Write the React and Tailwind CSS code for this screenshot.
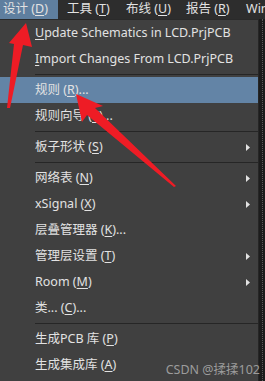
const menuBar = [
  { pre: '设计 (', key: 'D', post: ')', active: true, w: 'w-[58px]' },
  { pre: '工具 (', key: 'T', post: ')', w: 'w-[59px]' },
  { pre: '布线 (', key: 'U', post: ')', w: 'w-[60px]' },
  { pre: '报告 (', key: 'R', post: ')', w: 'w-[60px]' },
  { pre: 'Win', key: '', post: '', w: 'w-[28px]' },
];

// null = separator
const items = [
  { pre: '', key: 'U', post: 'pdate Schematics in LCD.PrjPCB' },
  { pre: '', key: 'I', post: 'mport Changes From LCD.PrjPCB' },
  null,
  { pre: '规则 (', key: 'R', post: ')...', active: true },
  { pre: '规则向导 (', key: 'E', post: ')...' },
  null,
  { pre: '板子形状 (', key: 'S', post: ')', sub: true },
  null,
  { pre: '网络表 (', key: 'N', post: ')', sub: true },
  { pre: 'xSignal (', key: 'X', post: ')', sub: true },
  { pre: '层叠管理器 (', key: 'K', post: ')...' },
  { pre: '管理层设置 (', key: 'T', post: ')', sub: true },
  { pre: 'Room (', key: 'M', post: ')', sub: true },
  { pre: '类... (', key: 'C', post: ')...' },
  null,
  { pre: '生成PCB 库 (', key: 'P', post: ')' },
  { pre: '生成集成库 (', key: 'A', post: ')' },
];

const Label = ({ pre, k, post }) => (
  <span className="whitespace-nowrap">
    {pre}
    {k && <span className="underline underline-offset-2">{k}</span>}
    {post}
  </span>
);

export default function App() {
  return (
    <div
      className="relative w-[265px] h-[381px] overflow-hidden bg-[#2b2b2b] text-[12.5px] leading-none text-[#e2e2e2]"
      style={{ fontFamily: '"Noto Sans", "Noto Sans CJK SC", sans-serif' }}
    >
      {/* menu bar */}
      <div className="flex h-[19px] bg-[#2d2d2d]">
        {menuBar.map((m, i) => (
          <div
            key={i}
            className={`flex items-center shrink-0 pl-[3px] ${m.w} ${m.active ? 'bg-[#5f7f9f]' : i > 0 ? 'pl-[9px]' : ''}`}
          >
            <Label pre={m.pre} k={m.key} post={m.post} />
          </div>
        ))}
      </div>

      <div className="flex h-[362px]">
        {/* dropdown */}
        <div className="w-[259px] bg-[#404040] border-t border-[#2a2a2a] border-r border-r-[#262626]">
          {items.map((it, i) =>
            it === null ? (
              <div key={i} className="py-[2px] pl-[35px]">
                <div className="h-px bg-[#262626]" />
              </div>
            ) : (
              <div
                key={i}
                className={`flex items-center h-[26px] pl-[35px] pr-[8px] ${it.active ? 'bg-[#6384a6]' : ''}`}
              >
                <Label pre={it.pre} k={it.key} post={it.post} />
                {it.sub && (
                  <svg className="ml-auto" width="4" height="7" viewBox="0 0 4 7">
                    <path d="M0 0 L4 3.5 L0 7 Z" fill="#e2e2e2" />
                  </svg>
                )}
              </div>
            )
          )}
        </div>
        {/* right edge strip */}
        <div className="w-[6px] bg-[#1c1c1c] flex justify-center">
          <div className="w-px border-l border-dotted border-[#5a5a5a]" />
        </div>
      </div>

      {/* red annotation arrows */}
      <svg className="absolute inset-0 pointer-events-none" width="265" height="381" viewBox="0 0 265 381">
        <polygon points="26,23 32,47 23,45 10,108 7,108 14,44 9,43" fill="#ee1c25" />
        <polygon points="76,94 103,106 95,108 176,186 174,187 87,115 82,122" fill="#ee1c25" />
      </svg>

      <div className="absolute right-[5px] bottom-[5px] text-[12.5px] text-[#9c9c9c] whitespace-nowrap">
        CSDN @揉揉102
      </div>
    </div>
  );
}
